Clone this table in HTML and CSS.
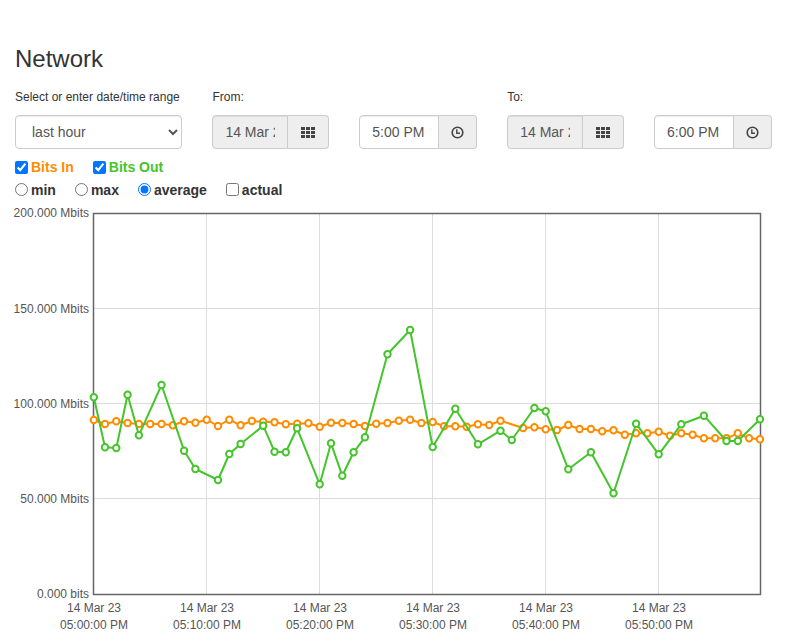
FILE: index.html
```html
<!DOCTYPE html>
<html lang="en">
<head>
<meta charset="utf-8">
<title>Network</title>
<link rel="stylesheet" href="styles.css">
</head>
<body>
<div class="page">
  <h1 class="title">Network</h1>
  <div class="range">
    <label class="lbl c1">Select or enter date/time range</label>
    <label class="lbl c2">From:</label>
    <label class="lbl c4">To:</label>
    <select class="ctl sel c1r"><option>last hour</option></select>
    <div class="group c2r">
      <input class="ctl inp ro" type="text" value="14 Mar 2023" readonly>
      <span class="addon wide">
        <svg width="14" height="11" viewBox="0 0 14 11" class="ico"><g fill="#444"><rect x="0" y="0" width="4" height="3"/><rect x="5" y="0" width="4" height="3"/><rect x="10" y="0" width="4" height="3"/><rect x="0" y="4" width="4" height="3"/><rect x="5" y="4" width="4" height="3"/><rect x="10" y="4" width="4" height="3"/><rect x="0" y="8" width="4" height="3"/><rect x="5" y="8" width="4" height="3"/><rect x="10" y="8" width="4" height="3"/></g></svg>
      </span>
    </div>
    <div class="group c3r">
      <input class="ctl inp" type="text" value="5:00 PM">
      <span class="addon">
        <svg width="13" height="13" viewBox="0 0 13 13" class="ico"><circle cx="6.5" cy="6.5" r="5.3" fill="none" stroke="#444" stroke-width="1.6"/><path d="M5.8 3.2V7.2H9" fill="none" stroke="#444" stroke-width="1.4"/></svg>
      </span>
    </div>
    <div class="group c4r">
      <input class="ctl inp ro" type="text" value="14 Mar 2023" readonly>
      <span class="addon wide">
        <svg width="14" height="11" viewBox="0 0 14 11" class="ico"><g fill="#444"><rect x="0" y="0" width="4" height="3"/><rect x="5" y="0" width="4" height="3"/><rect x="10" y="0" width="4" height="3"/><rect x="0" y="4" width="4" height="3"/><rect x="5" y="4" width="4" height="3"/><rect x="10" y="4" width="4" height="3"/><rect x="0" y="8" width="4" height="3"/><rect x="5" y="8" width="4" height="3"/><rect x="10" y="8" width="4" height="3"/></g></svg>
      </span>
    </div>
    <div class="group c5r">
      <input class="ctl inp" type="text" value="6:00 PM">
      <span class="addon">
        <svg width="13" height="13" viewBox="0 0 13 13" class="ico"><circle cx="6.5" cy="6.5" r="5.3" fill="none" stroke="#444" stroke-width="1.6"/><path d="M5.8 3.2V7.2H9" fill="none" stroke="#444" stroke-width="1.4"/></svg>
      </span>
    </div>
  </div>
  <div class="opts">
    <div class="row">
      <label class="opt in"><input type="checkbox" checked>Bits In</label>
      <label class="opt out"><input type="checkbox" checked>Bits Out</label>
    </div>
    <div class="row">
      <label class="opt"><input type="radio" name="agg">min</label>
      <label class="opt"><input type="radio" name="agg">max</label>
      <label class="opt"><input type="radio" name="agg" checked>average</label>
      <label class="opt"><input type="checkbox">actual</label>
    </div>
  </div>
</div>
<div class="chart">
<svg width="787" height="430" viewBox="0 204 787 430" class="plot">
  <defs>
    <marker id="mo" viewBox="-5 -5 10 10" markerWidth="10" markerHeight="10" markerUnits="userSpaceOnUse"><circle r="3.2" fill="#fff" stroke="#ff8c00" stroke-width="2"/></marker>
    <marker id="mg" viewBox="-5 -5 10 10" markerWidth="10" markerHeight="10" markerUnits="userSpaceOnUse"><circle r="3.2" fill="#fff" stroke="#44c52b" stroke-width="2"/></marker>
  </defs>
  <g stroke="#dcdcdc" stroke-width="1">
    <line x1="206.5" y1="213" x2="206.5" y2="594"/>
    <line x1="319.5" y1="213" x2="319.5" y2="594"/>
    <line x1="432.5" y1="213" x2="432.5" y2="594"/>
    <line x1="545.5" y1="213" x2="545.5" y2="594"/>
    <line x1="658.5" y1="213" x2="658.5" y2="594"/>
    <line x1="93" y1="308.5" x2="760" y2="308.5"/>
    <line x1="93" y1="403.5" x2="760" y2="403.5"/>
    <line x1="93" y1="498.5" x2="760" y2="498.5"/>
  </g>
  <rect x="93.5" y="213.5" width="667" height="381" fill="none" stroke="#666" stroke-width="1.5"/>
  <g class="ylab" text-anchor="end">
    <text x="89" y="217">200.000 Mbits</text>
    <text x="89" y="312.5">150.000 Mbits</text>
    <text x="89" y="407.5">100.000 Mbits</text>
    <text x="89" y="502.5">50.000 Mbits</text>
    <text x="89" y="597.5">0.000 bits</text>
  </g>
  <g class="xlab" text-anchor="middle">
    <text x="94" y="612">14 Mar 23</text><text x="94" y="628.5">05:00:00 PM</text>
    <text x="207" y="612">14 Mar 23</text><text x="207" y="628.5">05:10:00 PM</text>
    <text x="320" y="612">14 Mar 23</text><text x="320" y="628.5">05:20:00 PM</text>
    <text x="433" y="612">14 Mar 23</text><text x="433" y="628.5">05:30:00 PM</text>
    <text x="546" y="612">14 Mar 23</text><text x="546" y="628.5">05:40:00 PM</text>
    <text x="659" y="612">14 Mar 23</text><text x="659" y="628.5">05:50:00 PM</text>
  </g>
  <polyline fill="none" stroke="#ff8c00" stroke-width="2" stroke-linejoin="round" marker-start="url(#mo)" marker-mid="url(#mo)" marker-end="url(#mo)"
    points="93.8,420 105,424 116.3,421.3 127.6,423 138.9,424 150.2,424 161.5,424 172.8,425.3 184.1,421.3 195.4,422.7 206.7,419.7 218,426 229.3,419.7 240.6,425.3 251.9,421 263.2,421.7 274.5,422.3 285.8,424.3 297.1,423.7 308.4,423.3 319.7,426.7 331,422.7 342.3,423 353.6,424 364.9,426 376.2,423.7 387.5,423 398.8,420.7 410.1,419.7 421.4,423 432.7,422 444,426.3 455.3,426.3 466.6,426.7 477.9,424.3 489.2,425 500.5,420.7 523.1,428 534.4,427.3 545.7,429.3 557,430 568.3,425 579.6,429 590.9,429 602.2,431.3 613.5,430.3 624.8,434.7 636.1,433.3 647.4,433.3 658.7,431.7 670,435.7 681.3,433.3 692.6,434.7 703.9,438.3 715.2,438.3 726.5,438.3 737.8,433.3 749.1,438.3 760,439.3"/>
  <polyline fill="none" stroke="#44c52b" stroke-width="2" stroke-linejoin="round" marker-start="url(#mg)" marker-mid="url(#mg)" marker-end="url(#mg)"
    points="93.8,397.3 105,447.3 116.3,448 127.6,394.7 138.9,435.3 161.5,385 184.1,450.7 195.4,469 218,480 229.3,454 240.6,444 263.2,425.7 274.5,451.7 285.8,452.3 297.1,428.3 319.7,484.3 331,443.3 342.3,475.7 353.6,452.3 364.9,437.3 387.5,354.3 410.1,330 432.7,447 455.3,408.7 477.9,444.3 500.5,430.7 511.8,440 534.4,408 545.7,411.3 568.3,469.3 590.9,452.3 613.5,493.3 636.1,423.7 658.7,454.3 681.3,424.3 703.9,415.7 726.5,441 737.8,441 760,419.3"/>
</svg>
</div>
</body>
</html>
```

FILE: styles.css
```css
html, body {
  margin: 0;
  padding: 0;
  background: #fff;
}
body {
  font-family: "Liberation Sans", Arial, Helvetica, sans-serif;
  color: #333;
  font-size: 14px;
}
.page {
  padding: 45.5px 15px 0;
}
.title {
  margin: 0;
  font-size: 24px;
  font-weight: 500;
  line-height: 26.4px;
  color: #333;
}
.range {
  margin-top: 17px;
  display: grid;
  grid-template-columns: 167px 116.5px 117.5px 116.5px 117.5px;
  grid-template-rows: 16px 34px;
  column-gap: 30.4px;
  row-gap: 10.5px;
}
.lbl {
  font-size: 12px;
  line-height: 16px;
  white-space: nowrap;
}
.c1 { grid-column: 1; grid-row: 1; }
.c2 { grid-column: 2; grid-row: 1; }
.c4 { grid-column: 4; grid-row: 1; }
.c1r { grid-column: 1; grid-row: 2; }
.c2r { grid-column: 2; grid-row: 2; }
.c3r { grid-column: 3; grid-row: 2; }
.c4r { grid-column: 4; grid-row: 2; }
.c5r { grid-column: 5; grid-row: 2; }
.ctl {
  box-sizing: border-box;
  height: 34px;
  border: 1px solid #ccc;
  border-radius: 4px;
  background: #fff;
  color: #555;
  font-family: "Liberation Sans", Arial, Helvetica, sans-serif;
  font-size: 14px;
  box-shadow: inset 0 1px 1px rgba(0,0,0,.075);
  margin: 0;
}
.sel {
  width: 167px;
  padding: 6px 12px;
}
.group {
  display: flex;
  height: 34px;
}
.inp {
  flex: 1 1 auto;
  min-width: 0;
  width: 0;
  padding: 6px 12px;
  border-radius: 4px 0 0 4px;
  outline: none;
}
.inp.ro {
  background: #eee;
}
.addon {
  box-sizing: border-box;
  flex: 0 0 37.5px;
  height: 34px;
  display: flex;
  align-items: center;
  justify-content: center;
  background: #eee;
  border: 1px solid #ccc;
  border-left: 0;
  border-radius: 0 4px 4px 0;
}
.addon.wide {
  flex-basis: 40.5px;
}
.ico {
  display: block;
}
.opts {
  margin-top: 6.5px;
}
.row {
  display: flex;
  height: 23px;
}
.opt {
  display: inline-flex;
  align-items: center;
  margin-right: 19px;
  font-size: 14px;
  font-weight: bold;
  line-height: 23px;
  color: #333;
}
.opt input {
  width: 13px;
  height: 13px;
  margin: 1px 3px 0 0;
}
.row + .row .opt input {
  margin-top: -1px;
}
.opt.in { color: #ff8c00; }
.opt.out { color: #44c52b; }
.chart {
  margin-top: 2px;
}
.plot {
  display: block;
}
.ylab, .xlab {
  font-family: "Liberation Sans", Arial, Helvetica, sans-serif;
  font-size: 12px;
  fill: #555;
}
```
